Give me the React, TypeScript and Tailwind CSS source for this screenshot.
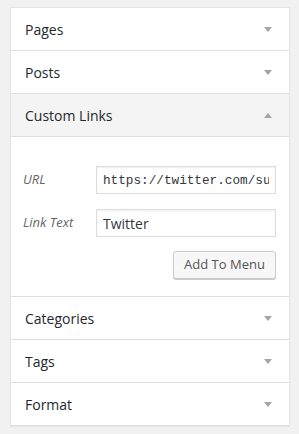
import React from "react";

const font = { fontFamily: '"Open Sans", "Noto Sans", sans-serif' };

function Arrow({ up = false }: { up?: boolean }) {
  return (
    <svg viewBox="0 0 8 5" className="h-[5px] w-[8px]" aria-hidden>
      <path d={up ? "M0 5 L4 0 L8 5 Z" : "M0 0 L8 0 L4 5 Z"} fill="#a0a5aa" />
    </svg>
  );
}

function Header({ title, open = false }: { title: string; open?: boolean }) {
  return (
    <div
      className={`flex h-[43px] items-center justify-between border-b border-[#dfdfdf] pl-[14px] pr-[17px] ${
        open ? "bg-[#f4f4f4]" : "bg-white"
      }`}
    >
      <span className="text-[14px] text-[#23282d]">{title}</span>
      <Arrow up={open} />
    </div>
  );
}

export default function App() {
  return (
    <div className="min-h-screen bg-[#f1f1f1] pt-[7px]" style={font}>
      <div className="ml-[10px] w-[280px] border border-[#e5e5e5] border-b-0 bg-white shadow-[0_1px_1px_rgba(0,0,0,0.04)]">
        <Header title="Pages" />
        <Header title="Posts" />
        <Header title="Custom Links" open />

        <div className="border-b border-[#dfdfdf] pl-[12px] pr-[13px] pt-[29px] pb-[17px]">
          <div className="flex items-center">
            <label className="w-[73px] text-[13px] italic text-[#666]">URL</label>
            <input
              readOnly
              value="https://twitter.com/support"
              className="h-[28px] w-[180px] border border-[#ddd] px-[6px] text-[12.7px] text-[#32373c] shadow-[inset_0_1px_2px_rgba(0,0,0,0.07)] outline-none"
              style={{ fontFamily: '"Liberation Mono", "DejaVu Sans Mono", monospace' }}
            />
          </div>
          <div className="mt-[15px] flex items-center">
            <label className="w-[73px] text-[13px] italic text-[#666]">Link Text</label>
            <input
              readOnly
              value="Twitter"
              className="h-[28px] w-[180px] border border-[#ddd] px-[6px] text-[14px] text-[#32373c] shadow-[inset_0_1px_2px_rgba(0,0,0,0.07)] outline-none"
            />
          </div>
          <div className="mt-[14px] flex justify-end">
            <button className="h-[28px] w-[103px] rounded-[3px] border border-[#ccc] bg-[#f7f7f7] text-[13px] text-[#555] shadow-[0_1px_0_#ccc]">
              Add To Menu
            </button>
          </div>
        </div>

        <Header title="Categories" />
        <Header title="Tags" />
        <Header title="Format" />
      </div>
    </div>
  );
}
